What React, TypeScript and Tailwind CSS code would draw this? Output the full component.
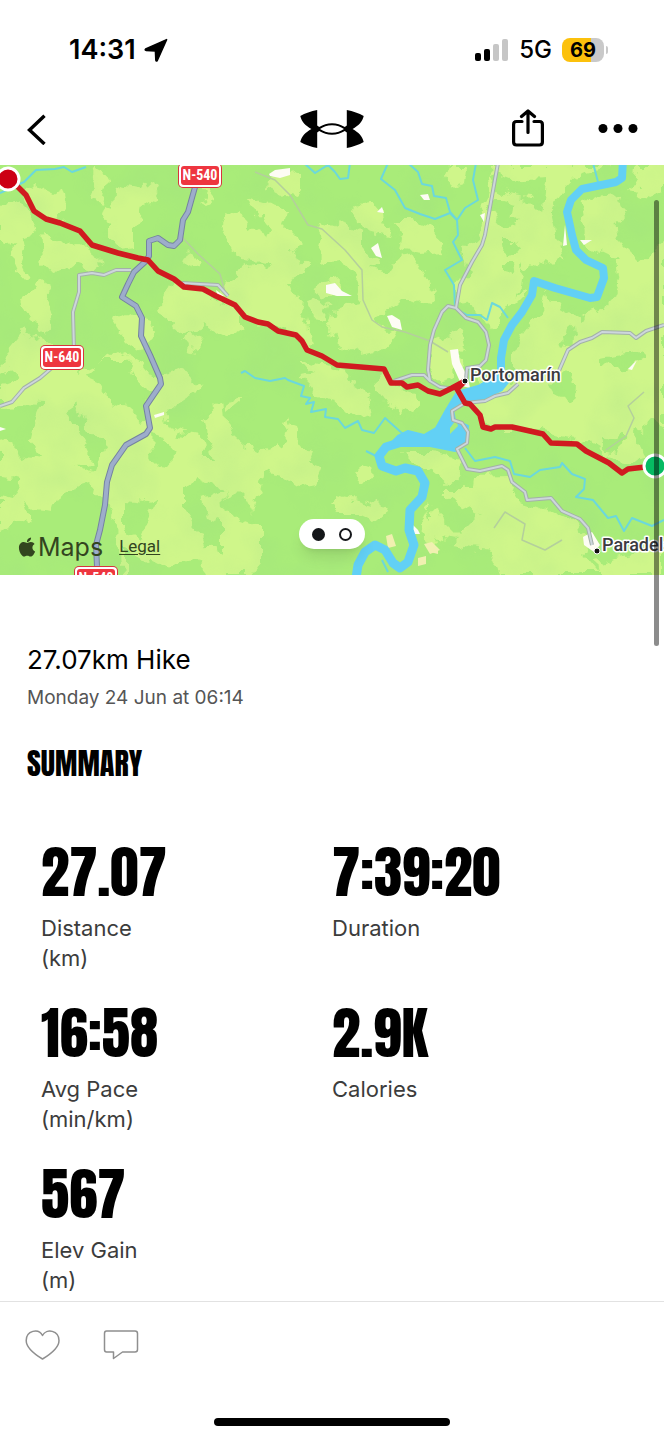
import { useState } from "react";
import { FaApple } from "react-icons/fa";

const STATS = [
  { value: "27.07", label: "Distance", unit: "(km)" },
  { value: "7:39:20", label: "Duration", unit: "" },
  { value: "16:58", label: "Avg Pace", unit: "(min/km)" },
  { value: "2.9K", label: "Calories", unit: "" },
  { value: "567", label: "Elev Gain", unit: "(m)" },
];

// open land, drawn over the forest colour
const FIELDS = [
  "22,192 36,183 50,190 64,196 66,208 56,214 66,222 50,222 40,216 28,208",
  "0,205 14,202 34,222 36,232 24,236 27,250 22,262 29,276 20,275 10,252 14,246 0,240",
  "40,233 50,238 54,246 78,240 86,248 96,255 106,262 92,270 76,264 66,272 54,275 42,262",
  "103,215 106,206 113,208 114,190 122,186 140,190 155,180 163,196 152,204 140,208 138,218 133,226 133,248 120,250 112,240 112,226",
  "88,174 92,168 104,174 108,182 104,203 92,200 96,188",
  "228,220 232,212 240,208 240,236 230,232",
  "190,172 214,176 210,200 198,206 206,190",
  "21,300 30,292 40,280 50,286 46,300 54,320 44,334 36,326 28,318",
  "110,318 126,310 138,316 150,320 155,330 148,345 136,348 126,340 118,330",
  "160,300 170,280 200,290 215,300 240,310 240,330 225,340 205,325 185,335 165,325",
  "190,250 196,256 200,266 192,270 186,264",
  "184,340 192,332 202,340 198,352 188,350",
  "220,225 228,208 240,212 248,230 268,240 272,225 250,210 246,198 256,200 274,205 290,210 285,225 300,240 292,245 295,260 308,268 302,275 292,280 300,298 298,312 306,322 312,350 300,340 285,330 265,320 240,318 222,300 220,290 240,270 258,262 268,272 272,262 245,258 232,250",
  "270,178 290,172 300,175 300,190 295,198 282,195 268,188",
  "315,220 330,222 360,232 360,250 380,262 368,270 390,275 400,260 412,256 420,270 430,290 440,294 430,305 410,300 400,300 388,312 372,320 360,310 365,290 350,270 340,258 320,260 325,240",
  "354,212 360,204 372,203 388,212 380,222 390,228 388,234 372,230 356,224",
  "395,220 410,220 432,228 445,240 440,252 420,254 400,250 402,236",
  "330,330 335,310 350,305 370,302 376,315 385,330 395,335 380,352 360,355 340,345",
  "313,290 322,284 340,280 338,288 326,296",
  "304,302 320,298 332,304 328,320 312,318",
  "300,360 320,365 345,372 350,382 330,380 310,372",
  "430,340 460,330 466,350 456,375 438,380 428,365",
  "462,300 458,285 468,270 462,250 478,235 490,190 488,165 664,165 664,390 484,392 496,340 484,318",
  "450,166 466,166 464,182 452,186 446,176",
  "0,372 8,350 24,330 40,340 80,372 120,352 160,376 186,370 200,386 222,378 226,420 222,450 226,575 0,575",
  "220,425 228,430 245,445 262,455 272,440 280,448 290,422 296,440 310,448 305,460 325,468 318,485 300,488 285,478 262,472 255,500 252,515 245,500 235,490 225,500 220,480",
  "220,505 240,520 262,528 262,560 250,575 220,575",
  "330,508 340,496 360,500 382,505 387,512 375,522 360,515 335,515",
  "352,470 360,464 372,468 374,478 360,480",
  "230,386 240,384 240,404 230,412 226,400",
  "300,375 320,372 345,378 368,395 372,415 358,418 335,400 315,395",
  "376,375 388,374 394,386 415,392 420,405 400,416 385,400 378,390",
  "400,452 430,452 460,458 462,476 450,486 430,468 408,460",
  "470,476 505,475 520,500 540,506 580,525 588,560 600,575 500,575 490,550 450,545 480,515 452,500 440,490 468,490",
  "430,512 446,524 462,540 440,536 430,528",
  "598,562 664,546 664,575 600,575",
  "484,376 664,376 664,455 640,462 620,460 580,438 540,430 494,430 474,405",
  "430,500 424,506 430,522 440,540 432,548 420,530",
];

// woods, drawn over the open land
const WOODS = [
  "0,405 20,404 42,405 34,425 30,440 45,457 25,455 5,440 0,442",
  "0,475 18,478 24,492 12,498 0,495",
  "0,532 30,520 24,500 34,510 54,512 60,492 90,482 104,500 118,530 122,575 0,575",
  "66,410 78,406 84,418 86,430 104,447 98,465 90,470 78,465 92,460 80,435",
  "96,362 130,362 143,388 150,415 146,424 128,408 112,404 100,384 86,378",
  "0,372 16,370 20,376 10,382 0,386",
  "150,432 165,435 174,448 172,465 160,470 152,455",
  "160,424 175,408 195,395 210,372 240,370 240,400 218,405 205,420 216,458 208,458 200,435 180,432",
  "125,502 145,504 158,500 145,522 138,540 125,530",
  "184,490 196,475 210,482 222,495 200,500 205,515 222,520 222,550 205,545 195,520 184,505",
  "126,548 160,566 200,562 210,575 126,575",
  "495,200 515,205 512,228 500,222 490,210",
  "488,172 510,180 545,178 540,210 530,200 505,196",
  "506,240 518,240 522,252 508,254",
  "500,264 510,264 512,275 500,272",
  "560,338 575,326 576,334 562,346",
  "600,358 625,355 640,352 645,360 625,368 602,366",
  "622,190 650,196 664,190 664,240 640,262 618,240 614,215",
  "560,260 600,262 618,258 600,310 580,318 550,300",
  "530,270 550,262 590,280 594,296 550,294",
  "550,385 564,372 572,380 570,400 556,396",
  "602,435 622,440 618,452 604,450",
  "634,432 655,420 664,426 664,480 640,456",
  "250,215 262,214 272,228 264,232",
  "375,250 392,254 394,268 380,266",
];

const CLEARINGS = [
  "582,200 596,193 622,205 625,218 604,232 590,226",
  "540,300 546,296 548,306 542,308",
  "510,300 526,290 526,296 514,308",
];

const TOWNS = [
  "269,174 275,170 290,168 290,175 280,178 270,176",
  "371,248 378,243 382,258 376,256",
  "326,285 335,283 342,291 352,296 337,296 326,293",
  "387,316 392,315 400,320 402,330 392,327",
  "377,212 382,207 384,213",
  "420,195 428,194 430,200 424,200",
  "580,240 592,240 584,245",
  "565,225 567,245 563,246",
  "628,369 637,360 632,370",
  "450,350 458,349 460,362 468,378 470,388 462,386 452,364",
  "480,215 485,213 484,222",
  "583,537 592,532 600,545 594,552 584,545",
  "154,415 164,412 164,415 155,418",
  "0,427 6,429 0,431",
  "216,290 224,296 218,298",
  "412,524 418,530 420,534 414,534",
];

const HAMLETS = [
  "386,536 392,534 396,546 388,548",
  "424,544 432,542 440,550 430,554",
  "418,558 426,556 426,564 418,566",
  "430,546 438,548 438,554 430,552",
];

const RIVER =
  "623,160 622,178 616,182 582,189 571,200 567,212 572,235 576,250 586,260 603,268 604,278 597,297 590,298 555,288 534,281 532,295 522,312 512,325 504,340 501,358 501,380";
const LOWER_RIVER =
  "402,442 386,447 379,456 382,466 396,471 405,468 418,471 425,483 422,497 410,510 409,530 414,545 408,562 400,568 393,563 385,550 375,545 365,552 358,565 356,578";
const LAKE =
  "457,392 446,410 436,428 424,435 408,431 398,436 390,444 400,446 430,446 455,451 466,442 468,426 455,420 453,410 468,402 485,398 502,390 510,380 496,376 478,386";

const STREAMS = [
  "241,373 245,371 255,378 270,381 285,378 288,380 304,386 301,396 310,398 306,404 314,402 311,412 326,409 325,417 338,419 345,428 358,421 362,430 374,433 385,418 403,434",
  "304,163 315,173 328,165 335,172 340,179 348,178 350,163",
  "388,163 381,179 395,190 405,208 420,214 435,219 450,213 457,220",
  "408,163 418,172 422,184 432,186 434,196 446,198 450,212 457,220 458,235 453,242 462,260 445,270 454,285 455,308 467,315 480,315 487,320 492,303 500,307 508,318",
  "476,163 473,180 478,200 465,208 457,220",
  "593,163 598,182",
  "0,193 24,182 36,170 55,169 64,167 72,172 86,167",
  "465,448 475,461 495,457 510,461 514,474 530,477 540,470 560,467 562,463 572,474 585,479 584,489 576,497 593,500 608,518 616,516 624,531 632,518 652,526 664,520",
  "366,451 378,457",
  "382,560 388,572",
];

const LANES = [
  "255,172 275,180 290,195 308,225 322,229 345,250 362,270 363,300 372,320 382,327 405,332 430,341 448,352",
  "180,235 198,254 220,274 225,292",
  "494,528 505,512 525,524 522,540 545,550 562,540",
  "606,450 626,436 634,418 628,406 644,392",
];

const MINOR_ROADS = [
  "131,270 116,270 104,275 92,273 79,275 79,292 73,312 74,350",
  "54,366 40,378 24,388 12,402 0,406",
  "182,283 218,285 228,296",
  "498,163 485,235 482,245 472,262 460,285 456,308",
  "456,308 448,306 442,312 434,330 430,345 428,370 430,381 440,387 456,389",
  "456,308 466,318 478,322 486,332 489,345 486,360 480,366 467,368 466,380",
  "394,381 412,375 424,375 430,381",
  "558,373 568,350 580,342 592,338 602,332 630,333 636,338 646,331 664,325",
  "518,384 508,393 495,396 485,401 465,403 452,411 453,420 462,423 468,432 467,443 457,449 467,469 480,471 502,466 508,470 512,482 525,492 527,500 551,498 562,511 580,519 588,528 592,545",
];

const MAIN_ROAD =
  "197,180 188,212 183,220 180,240 174,246 168,245 158,238 149,241 149,256 146,261 134,272 128,284 122,297 136,306 142,318 141,336 150,355 160,378 161,384 146,406 150,428 146,434 126,445 112,465 107,482 105,505 100,530 96,545 97,566";

const ROUTE =
  "8,179 18,187 26,195 34,211 46,219 60,223 80,231 92,245 118,253 138,258 148,260 158,271 174,279 184,287 203,289 216,296 235,305 245,317 258,322 268,324 278,331 296,335 302,341 307,350 322,356 337,365 384,369 391,383 402,383 407,387 418,385 428,391 440,394 452,388 465,381 457,389 465,403 470,404 480,415 483,427 491,429 495,427 512,427 543,434 551,443 577,444 586,451 609,463 622,473 628,469 654,466";

const RoadShield = ({ x, y, name }: { x: number; y: number; name: string }) => (
  <g>
    <rect x={x - 22} y={y - 12} width="44" height="25" rx="5" fill="#d8343c" />
    <rect x={x - 21} y={y - 11} width="42" height="23" rx="4" fill="#fff" />
    <rect x={x - 19} y={y - 9} width="38" height="19" rx="3" fill="#ee3640" />
    <text
      x={x}
      y={y + 5}
      textAnchor="middle"
      fill="#fff"
      className="font-['Roboto_Condensed','Roboto',sans-serif] text-[14px] font-bold"
    >
      {name}
    </text>
  </g>
);

const PlaceLabel = ({ x, y, name }: { x: number; y: number; name: string }) => (
  <g>
    <circle cx={x} cy={y} r="3" fill="#111" stroke="#fff" strokeWidth="1" />
    <text
      x={x + 5}
      y={y}
      fill="#3b3b40"
      stroke="#fff"
      strokeWidth="3"
      strokeLinejoin="round"
      paintOrder="stroke"
      className="font-['Roboto',sans-serif] text-[18px] font-medium"
    >
      {name}
    </text>
  </g>
);

const RouteMap = () => (
  <svg
    viewBox="0 165 664 410"
    className="block w-full"
    role="img"
    aria-label="Route map"
  >
    <defs>
      <filter id="rough" x="-5%" y="-5%" width="110%" height="110%" colorInterpolationFilters="sRGB">
        <feTurbulence type="fractalNoise" baseFrequency="0.06" numOctaves="3" seed="4" />
        <feDisplacementMap in="SourceGraphic" scale="20" xChannelSelector="R" yChannelSelector="G" />
      </filter>
      <filter id="relief" x="0" y="0" width="100%" height="100%">
        <feTurbulence type="fractalNoise" baseFrequency="0.02" numOctaves="3" seed="9" />
        <feColorMatrix values="0 0 0 0 0.3  0 0 0 0 0.65  0 0 0 0 0.25  1.2 0 0 0 -0.5" />
      </filter>
    </defs>
    <rect x="0" y="165" width="664" height="410" fill="#a9ec79" />
    <g filter="url(#rough)">
      {FIELDS.map((p) => (
        <polygon key={p} points={p} fill="#cff68a" />
      ))}
      {WOODS.map((p) => (
        <polygon key={p} points={p} fill="#a9ec79" />
      ))}
      <polyline points={RIVER} fill="none" stroke="#a9ec79" strokeWidth="28" />
      {CLEARINGS.map((p) => (
        <polygon key={p} points={p} fill="#cff68a" />
      ))}
    </g>
    <rect x="0" y="165" width="664" height="410" filter="url(#relief)" opacity="0.3" />
    {TOWNS.map((p) => (
      <polygon key={p} points={p} fill="#fdfcf4" />
    ))}
    {HAMLETS.map((p) => (
      <polygon key={p} points={p} fill="#f0f0b0" />
    ))}
    <g fill="none" stroke="#62d0f5" strokeLinejoin="round">
      {STREAMS.map((p) => (
        <polyline key={p} points={p} stroke="#6bd8dc" strokeWidth="2" />
      ))}
      <polyline points={RIVER} strokeWidth="8" />
      <polyline points={LOWER_RIVER} strokeWidth="9" />
      <polygon points={LAKE} fill="#62d0f5" strokeWidth="2" />
    </g>
    <polygon points="450,428 456,420 458,426 450,434" fill="#a9ec79" />
    <g fill="none" strokeLinejoin="round">
      {LANES.map((p) => (
        <polyline key={p} points={p} stroke="#b4cf9c" strokeWidth="1.5" />
      ))}
      {MINOR_ROADS.map((p) => (
        <polyline key={p} points={p} stroke="#a3b1a8" strokeWidth="4" />
      ))}
      {MINOR_ROADS.map((p) => (
        <polyline key={p} points={p} stroke="#cdd6dc" strokeWidth="2" />
      ))}
      <polyline points={MAIN_ROAD} stroke="#7583a0" strokeWidth="6" />
      <polyline points={MAIN_ROAD} stroke="#9dadcb" strokeWidth="4" />
      <polyline points={ROUTE} stroke="#d01a20" strokeWidth="5.5" strokeLinecap="round" />
    </g>
    <RoadShield x={200} y={175} name="N-540" />
    <RoadShield x={62} y={357} name="N-640" />
    <RoadShield x={96} y={578} name="N-540" />
    <PlaceLabel x={465} y={381} name="Portomarín" />
    <PlaceLabel x={597} y={551} name="Paradela" />
    <circle cx="8" cy="179" r="11" fill="#cc0014" stroke="#fff" strokeWidth="3" />
    <circle cx="655" cy="466" r="11" fill="#06bb63" stroke="#fff" strokeWidth="3" />
  </svg>
);

const StatusBar = () => (
  <div className="flex h-25 items-center justify-between pr-14 pl-[69px] text-black">
    <div className="flex items-center gap-2 text-[27px] font-semibold">
      <span>14:31</span>
      <svg viewBox="0 0 24 24" className="size-6" stroke="#000" strokeWidth="1.5" strokeLinejoin="round" aria-hidden="true">
        <path d="M22.600 1.600L13.200 22.600Q12.200 23.600 11.800 22L11.400 13L2 12.400Q.600 12 1.600 11Z" />
      </svg>
    </div>
    <div className="flex items-center gap-2.5">
      <svg viewBox="0 0 34 22" className="h-[22px] w-[34px]" aria-hidden="true">
        <rect x="0" y="14" width="6" height="8" rx="2" />
        <rect x="9" y="10" width="6" height="12" rx="2" />
        <rect x="18" y="5" width="6" height="17" rx="2" fill="#c6c6c6" />
        <rect x="27" y="0" width="6" height="22" rx="2" fill="#c6c6c6" />
      </svg>
      <span className="text-2xl font-medium">5G</span>
      <div className="flex items-center gap-0.5">
        <div className="flex h-6 w-[42px] items-center justify-center rounded-lg bg-linear-to-r from-[#fcc10c] from-69% to-[#c9c9c9] to-69% text-xl font-bold">
          69
        </div>
        <div className="h-2 w-0.5 rounded-r-full bg-[#c9c9c9]" />
      </div>
    </div>
  </div>
);

const NavBar = () => (
  <header className="grid h-[65px] grid-cols-3 items-center px-[26px] pb-2">
    <button aria-label="Back" className="justify-self-start">
      <svg viewBox="0 0 24 32" className="h-8 w-6" fill="none" stroke="#000" strokeWidth="3.4">
        <path d="M18.500 2.700L3.500 17L18.500 31" />
      </svg>
    </button>
    <svg viewBox="0 0 64 38" className="h-[38px] w-16 justify-self-center" role="img" aria-label="Under Armour">
      <path d="M17.200 0C11 1.200 5 3.200.3 6c1.200 5.800 5.200 9.600 11.100 13C5.500 22.400 1.500 26.200.3 32c4.700 2.800 10.700 4.800 16.900 6V22.400l2-1.400c4 2.400 8 3.800 12.800 3.800s8.800-1.400 12.800-3.800l2 1.400V38c6.200-1.200 12.200-3.200 16.900-6-1.200-5.800-5.200-9.600-11.100-13 5.900-3.400 9.900-7.200 11.100-13C59 3.200 53 1.200 46.800 0v15.600l-2 1.400c-4-2.400-8-3.800-12.800-3.800s-8.800 1.400-12.800 3.800l-2-1.400zM32 15.200c5 0 8.600 1.500 12 3.800-3.400 2.300-7 3.800-12 3.800S23.400 21.300 20 19c3.400-2.300 7-3.800 12-3.800z" />
    </svg>
    <div className="flex items-center gap-[53px] justify-self-end">
      <button aria-label="Share">
        <svg viewBox="0 0 34 40" className="h-10 w-[34px]" fill="none" stroke="#000" strokeWidth="3.2" strokeLinejoin="round" strokeLinecap="round">
          <path d="M11 12.500H5.500Q2.600 12.500 2.600 15.500V33Q2.600 36 5.500 36H28.500Q31.400 36 31.400 33V15.500Q31.400 12.500 28.500 12.500H23" />
          <path d="M17 23.500V2M10.500 7.500L17 2L23.500 7.500" />
        </svg>
      </button>
      <button aria-label="More">
        <svg viewBox="0 0 40 10" className="h-2.5 w-10">
          <circle cx="5" cy="4.500" r="4.500" />
          <circle cx="20" cy="4.500" r="4.500" />
          <circle cx="35" cy="4.500" r="4.500" />
        </svg>
      </button>
    </div>
  </header>
);

const App = () => {
  const [slide, setSlide] = useState(0);

  return (
    <div className="relative flex min-h-dvh flex-col bg-white font-['Inter',sans-serif] text-black">
      <StatusBar />
      <NavBar />

      <section className="relative">
        <RouteMap />
        <div className="absolute bottom-3 left-4 flex items-center gap-4 text-[#33451f]">
          <span className="flex items-center text-[25px] leading-8">
            <FaApple className="size-[22px]" />
            Maps
          </span>
          <a href="#legal" className="font-['Roboto',sans-serif] text-[17px] underline underline-offset-2">
            Legal
          </a>
        </div>
        <div className="absolute bottom-[26px] left-1/2 flex h-[30px] w-[66px] -translate-x-1/2 items-center justify-center gap-3.5 rounded-full bg-white shadow-lg">
          {[0, 1].map((i) => (
            <button
              key={i}
              aria-label={`Slide ${i + 1}`}
              onClick={() => setSlide(i)}
              className={
                slide === i
                  ? "size-[13px] rounded-full border-2 border-[#15171a] bg-[#15171a]"
                  : "size-[13px] rounded-full border-2 border-[#15171a] bg-white"
              }
            />
          ))}
        </div>
      </section>

      <main className="pt-[69px] pb-1.5">
        <div className="px-[27px]">
          <h1 className="text-[26px] leading-8">27.07km Hike</h1>
          <p className="mt-2.5 text-[19px] leading-6 text-[#555]">
            Monday 24 Jun at 06:14
          </p>
          <h2 className="mt-[38px] font-[Impact,Anton,'Roboto_Condensed',sans-serif] text-[30px] leading-8">
            SUMMARY
          </h2>
        </div>
        <dl className="mt-15 grid grid-cols-2 gap-y-7 px-[41px]">
          {STATS.map((stat) => (
            <div key={stat.label} className="flex flex-col-reverse justify-end gap-[9px]">
              <dt className="text-[22px] leading-[30px] text-[#3c3c3c]">
                {stat.label}
                {stat.unit && <span className="block">{stat.unit}</span>}
              </dt>
              <dd className="font-[Impact,Anton,'Roboto_Condensed',sans-serif] text-[57px] leading-16">
                {stat.value}
              </dd>
            </div>
          ))}
        </dl>
      </main>

      <footer className="flex grow flex-col justify-between border-t border-[#e2e2e2] pb-[14px]">
        <div className="flex gap-10 px-6 pt-6">
          <button aria-label="Like">
            <svg viewBox="0 0 38 38" className="size-[38px]" fill="none" stroke="#8f8f8f" strokeWidth="1.500" strokeLinejoin="round">
              <path d="M18.500 33C11 28.500 2.200 22.500 2.200 14.500C2.200 4.500 14.500 1.800 18.500 9.500C22.500 1.800 35 4.500 35 14.500C35 22.500 26 28.500 18.500 33Z" />
            </svg>
          </button>
          <button aria-label="Comment">
            <svg viewBox="0 0 38 38" className="size-[38px]" fill="none" stroke="#8f8f8f" strokeWidth="1.500" strokeLinejoin="round">
              <path d="M4.500 5H33Q35.500 5 35.500 7.500V23.500Q35.500 26 33 26H20.500L11.500 32.500V26H4.500Q2.500 26 2.500 23.500V7.500Q2.500 5 4.500 5Z" />
            </svg>
          </button>
        </div>
        <div className="mx-auto h-2 w-[236px] rounded-full bg-black" />
      </footer>

      {/* scroll indicator */}
      <div className="absolute top-[200px] right-[5px] h-[446px] w-[5px] rounded-full bg-black/45" />
    </div>
  );
};

export default App;
